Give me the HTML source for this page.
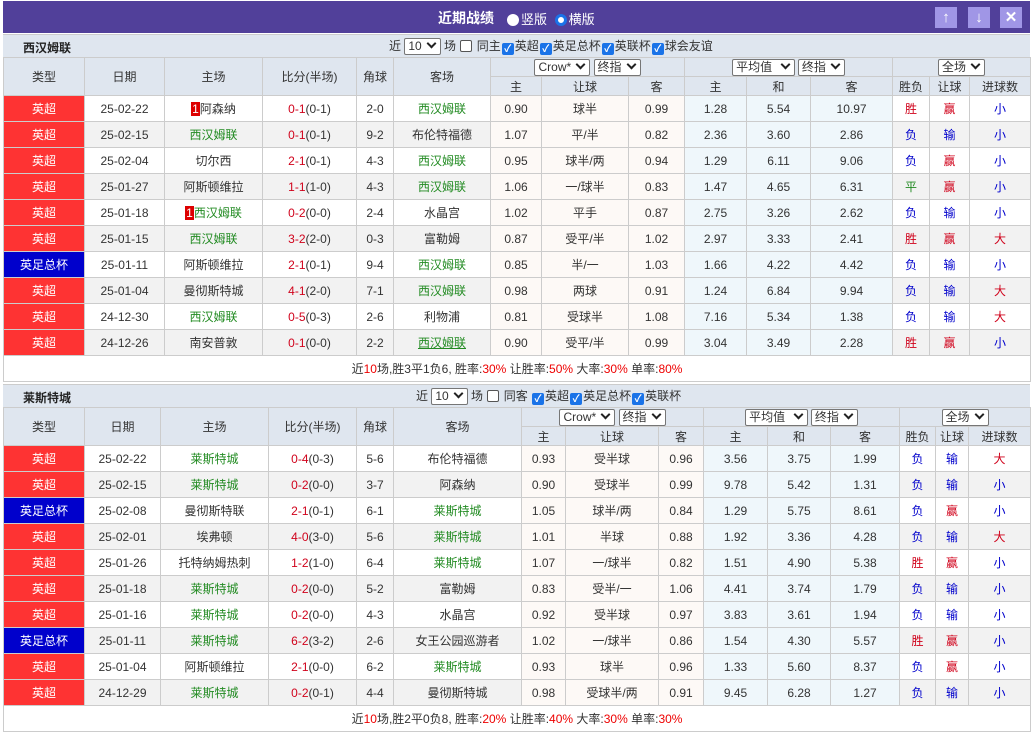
<!DOCTYPE html>
<html><head><meta charset="utf-8"><style>
*{margin:0;padding:0;box-sizing:border-box}
body{width:1033px;height:735px;background:#fff;font-family:"Liberation Sans","Noto Sans CJK SC",sans-serif;font-size:12px;color:#333;position:relative;overflow:hidden}
.bar{position:absolute;left:3px;top:1px;width:1027px;height:32px;background:#51409a;color:#fff}
.bar .t{position:absolute;left:435px;top:7px;font-size:14px;font-weight:bold}
.rad{display:inline-block;width:12px;height:12px;border-radius:50%;background:#fff;vertical-align:-2px;margin:0 2px 0 4px}
.rad.on{border:3px solid #1a73e8;background:#fff}
.bar .r{position:absolute;left:500px;top:8px;font-size:13px}
.btn{position:absolute;top:6px;width:22px;height:21px;background:#a096e6;color:#fff;text-align:center;font-size:15px;line-height:21px;font-weight:bold}
.team{position:absolute;left:3px;width:1027px;height:23px;background:#dfe6ef;border-top:1px solid #ccc}
.team .n{position:absolute;left:20px;top:4px;font-weight:bold;font-size:12px;color:#222}
.team .f{position:absolute;top:2px;font-size:12px;white-space:nowrap}
.sel{display:inline-block;border:1px solid #767676;background:#fff;height:17px;line-height:15px;padding:0 3px;font-size:12px;vertical-align:middle;border-radius:2px}
.sel:after{content:"";display:inline-block;width:5px;height:5px;border-right:2px solid #222;border-bottom:2px solid #222;transform:rotate(45deg);margin:0 2px 3px 6px}
.cb{display:inline-block;width:12px;height:12px;border:1px solid #555;border-radius:2px;background:#fff;vertical-align:-2px;margin:0 1px}
.cb.on{background:#1a73e8;border-color:#1a73e8;color:#fff;font-size:10px;line-height:11px;text-align:center;font-weight:bold}
table{position:absolute;left:3px;border-collapse:collapse;table-layout:fixed;width:1027px}
td{border:1px solid #ccc;text-align:center;white-space:nowrap;overflow:hidden;font-size:12px}
thead td{background:#dfe6ef;color:#333;height:19px}
tbody td{height:26px}
tbody tr:nth-child(even) td{background:#f2f2f2}
td.ty{background:#fe3333!important;color:#fff}
td.fa{background:#0000cc!important;color:#fff}
td.o1{background:#fdf9f6!important}
td.o2{background:#eff7fb!important}
.g{color:#228b22}.rd{color:#d0021b}.bl{color:#00c}
.u{text-decoration:underline}
.rk{background:#d00;color:#fff;padding:0 1px}
.sum td{height:26px;text-align:center;background:#fff!important}
.red{color:#e00}
</style></head><body>
<div class="bar"><span class="t">近期战绩</span><span class="r"><span class="rad"></span>竖版 <span class="rad on"></span>横版</span>
<div class="btn" style="left:932px">↑</div><div class="btn" style="left:965px">↓</div><div class="btn" style="left:997px">✕</div></div>

<div class="team" style="top:34px"><span class="n">西汉姆联</span><span class="f" style="left:386px">近 <span class="sel">10</span> 场 <span class="cb"></span> 同主<span class="cb on">✓</span>英超<span class="cb on">✓</span>英足总杯<span class="cb on">✓</span>英联杯<span class="cb on">✓</span>球会友谊</span></div>

<table style="top:57px">
<colgroup><col style="width:81px"><col style="width:80px"><col style="width:98px"><col style="width:94px"><col style="width:37px"><col style="width:97px"><col style="width:51px"><col style="width:87px"><col style="width:56px"><col style="width:62px"><col style="width:64px"><col style="width:82px"><col style="width:37px"><col style="width:40px"><col style="width:61px"></colgroup>
<thead><tr><td rowspan="2">类型</td><td rowspan="2">日期</td><td rowspan="2">主场</td><td rowspan="2">比分(半场)</td><td rowspan="2">角球</td><td rowspan="2">客场</td><td colspan="3"><span class="sel">Crow*</span> <span class="sel">终指</span></td><td colspan="3"><span class="sel">平均值 </span> <span class="sel">终指</span></td><td colspan="3"><span class="sel">全场</span></td></tr>
<tr><td>主</td><td>让球</td><td>客</td><td>主</td><td>和</td><td>客</td><td>胜负</td><td>让球</td><td>进球数</td></tr></thead>
<tbody>
<tr><td class="ty">英超</td><td>25-02-22</td><td><span class="rk">1</span>阿森纳</td><td><span class="rd">0-1</span>(0-1)</td><td>2-0</td><td class="g">西汉姆联</td><td class="o1">0.90</td><td class="o1">球半</td><td class="o1">0.99</td><td class="o2">1.28</td><td class="o2">5.54</td><td class="o2">10.97</td><td class="rd">胜</td><td class="rd">赢</td><td class="bl">小</td></tr>
<tr><td class="ty">英超</td><td>25-02-15</td><td class="g">西汉姆联</td><td><span class="rd">0-1</span>(0-1)</td><td>9-2</td><td>布伦特福德</td><td class="o1">1.07</td><td class="o1">平/半</td><td class="o1">0.82</td><td class="o2">2.36</td><td class="o2">3.60</td><td class="o2">2.86</td><td class="bl">负</td><td class="bl">输</td><td class="bl">小</td></tr>
<tr><td class="ty">英超</td><td>25-02-04</td><td>切尔西</td><td><span class="rd">2-1</span>(0-1)</td><td>4-3</td><td class="g">西汉姆联</td><td class="o1">0.95</td><td class="o1">球半/两</td><td class="o1">0.94</td><td class="o2">1.29</td><td class="o2">6.11</td><td class="o2">9.06</td><td class="bl">负</td><td class="rd">赢</td><td class="bl">小</td></tr>
<tr><td class="ty">英超</td><td>25-01-27</td><td>阿斯顿维拉</td><td><span class="rd">1-1</span>(1-0)</td><td>4-3</td><td class="g">西汉姆联</td><td class="o1">1.06</td><td class="o1">一/球半</td><td class="o1">0.83</td><td class="o2">1.47</td><td class="o2">4.65</td><td class="o2">6.31</td><td class="g">平</td><td class="rd">赢</td><td class="bl">小</td></tr>
<tr><td class="ty">英超</td><td>25-01-18</td><td class="g"><span class="rk">1</span>西汉姆联</td><td><span class="rd">0-2</span>(0-0)</td><td>2-4</td><td>水晶宫</td><td class="o1">1.02</td><td class="o1">平手</td><td class="o1">0.87</td><td class="o2">2.75</td><td class="o2">3.26</td><td class="o2">2.62</td><td class="bl">负</td><td class="bl">输</td><td class="bl">小</td></tr>
<tr><td class="ty">英超</td><td>25-01-15</td><td class="g">西汉姆联</td><td><span class="rd">3-2</span>(2-0)</td><td>0-3</td><td>富勒姆</td><td class="o1">0.87</td><td class="o1">受平/半</td><td class="o1">1.02</td><td class="o2">2.97</td><td class="o2">3.33</td><td class="o2">2.41</td><td class="rd">胜</td><td class="rd">赢</td><td class="rd">大</td></tr>
<tr><td class="fa">英足总杯</td><td>25-01-11</td><td>阿斯顿维拉</td><td><span class="rd">2-1</span>(0-1)</td><td>9-4</td><td class="g">西汉姆联</td><td class="o1">0.85</td><td class="o1">半/一</td><td class="o1">1.03</td><td class="o2">1.66</td><td class="o2">4.22</td><td class="o2">4.42</td><td class="bl">负</td><td class="bl">输</td><td class="bl">小</td></tr>
<tr><td class="ty">英超</td><td>25-01-04</td><td>曼彻斯特城</td><td><span class="rd">4-1</span>(2-0)</td><td>7-1</td><td class="g">西汉姆联</td><td class="o1">0.98</td><td class="o1">两球</td><td class="o1">0.91</td><td class="o2">1.24</td><td class="o2">6.84</td><td class="o2">9.94</td><td class="bl">负</td><td class="bl">输</td><td class="rd">大</td></tr>
<tr><td class="ty">英超</td><td>24-12-30</td><td class="g">西汉姆联</td><td><span class="rd">0-5</span>(0-3)</td><td>2-6</td><td>利物浦</td><td class="o1">0.81</td><td class="o1">受球半</td><td class="o1">1.08</td><td class="o2">7.16</td><td class="o2">5.34</td><td class="o2">1.38</td><td class="bl">负</td><td class="bl">输</td><td class="rd">大</td></tr>
<tr><td class="ty">英超</td><td>24-12-26</td><td>南安普敦</td><td><span class="rd">0-1</span>(0-0)</td><td>2-2</td><td class="g u">西汉姆联</td><td class="o1">0.90</td><td class="o1">受平/半</td><td class="o1">0.99</td><td class="o2">3.04</td><td class="o2">3.49</td><td class="o2">2.28</td><td class="rd">胜</td><td class="rd">赢</td><td class="bl">小</td></tr>
<tr class="sum"><td colspan="15">近<span class="red">10</span>场,胜3平1负6, 胜率:<span class="red">30%</span> 让胜率:<span class="red">50%</span> 大率:<span class="red">30%</span> 单率:<span class="red">80%</span></td></tr>
</tbody></table>

<div class="team" style="top:384px"><span class="n">莱斯特城</span><span class="f" style="left:413px">近 <span class="sel">10</span> 场 <span class="cb"></span> 同客 <span class="cb on">✓</span>英超<span class="cb on">✓</span>英足总杯<span class="cb on">✓</span>英联杯</span></div>

<table style="top:407px">
<colgroup><col style="width:81px"><col style="width:76px"><col style="width:108px"><col style="width:88px"><col style="width:37px"><col style="width:128px"><col style="width:44px"><col style="width:93px"><col style="width:45px"><col style="width:64px"><col style="width:63px"><col style="width:69px"><col style="width:36px"><col style="width:33px"><col style="width:62px"></colgroup>
<thead><tr><td rowspan="2">类型</td><td rowspan="2">日期</td><td rowspan="2">主场</td><td rowspan="2">比分(半场)</td><td rowspan="2">角球</td><td rowspan="2">客场</td><td colspan="3"><span class="sel">Crow*</span> <span class="sel">终指</span></td><td colspan="3"><span class="sel">平均值 </span> <span class="sel">终指</span></td><td colspan="3"><span class="sel">全场</span></td></tr>
<tr><td>主</td><td>让球</td><td>客</td><td>主</td><td>和</td><td>客</td><td>胜负</td><td>让球</td><td>进球数</td></tr></thead>
<tbody>
<tr><td class="ty">英超</td><td>25-02-22</td><td class="g">莱斯特城</td><td><span class="rd">0-4</span>(0-3)</td><td>5-6</td><td>布伦特福德</td><td class="o1">0.93</td><td class="o1">受半球</td><td class="o1">0.96</td><td class="o2">3.56</td><td class="o2">3.75</td><td class="o2">1.99</td><td class="bl">负</td><td class="bl">输</td><td class="rd">大</td></tr>
<tr><td class="ty">英超</td><td>25-02-15</td><td class="g">莱斯特城</td><td><span class="rd">0-2</span>(0-0)</td><td>3-7</td><td>阿森纳</td><td class="o1">0.90</td><td class="o1">受球半</td><td class="o1">0.99</td><td class="o2">9.78</td><td class="o2">5.42</td><td class="o2">1.31</td><td class="bl">负</td><td class="bl">输</td><td class="bl">小</td></tr>
<tr><td class="fa">英足总杯</td><td>25-02-08</td><td>曼彻斯特联</td><td><span class="rd">2-1</span>(0-1)</td><td>6-1</td><td class="g">莱斯特城</td><td class="o1">1.05</td><td class="o1">球半/两</td><td class="o1">0.84</td><td class="o2">1.29</td><td class="o2">5.75</td><td class="o2">8.61</td><td class="bl">负</td><td class="rd">赢</td><td class="bl">小</td></tr>
<tr><td class="ty">英超</td><td>25-02-01</td><td>埃弗顿</td><td><span class="rd">4-0</span>(3-0)</td><td>5-6</td><td class="g">莱斯特城</td><td class="o1">1.01</td><td class="o1">半球</td><td class="o1">0.88</td><td class="o2">1.92</td><td class="o2">3.36</td><td class="o2">4.28</td><td class="bl">负</td><td class="bl">输</td><td class="rd">大</td></tr>
<tr><td class="ty">英超</td><td>25-01-26</td><td>托特纳姆热刺</td><td><span class="rd">1-2</span>(1-0)</td><td>6-4</td><td class="g">莱斯特城</td><td class="o1">1.07</td><td class="o1">一/球半</td><td class="o1">0.82</td><td class="o2">1.51</td><td class="o2">4.90</td><td class="o2">5.38</td><td class="rd">胜</td><td class="rd">赢</td><td class="bl">小</td></tr>
<tr><td class="ty">英超</td><td>25-01-18</td><td class="g">莱斯特城</td><td><span class="rd">0-2</span>(0-0)</td><td>5-2</td><td>富勒姆</td><td class="o1">0.83</td><td class="o1">受半/一</td><td class="o1">1.06</td><td class="o2">4.41</td><td class="o2">3.74</td><td class="o2">1.79</td><td class="bl">负</td><td class="bl">输</td><td class="bl">小</td></tr>
<tr><td class="ty">英超</td><td>25-01-16</td><td class="g">莱斯特城</td><td><span class="rd">0-2</span>(0-0)</td><td>4-3</td><td>水晶宫</td><td class="o1">0.92</td><td class="o1">受半球</td><td class="o1">0.97</td><td class="o2">3.83</td><td class="o2">3.61</td><td class="o2">1.94</td><td class="bl">负</td><td class="bl">输</td><td class="bl">小</td></tr>
<tr><td class="fa">英足总杯</td><td>25-01-11</td><td class="g">莱斯特城</td><td><span class="rd">6-2</span>(3-2)</td><td>2-6</td><td>女王公园巡游者</td><td class="o1">1.02</td><td class="o1">一/球半</td><td class="o1">0.86</td><td class="o2">1.54</td><td class="o2">4.30</td><td class="o2">5.57</td><td class="rd">胜</td><td class="rd">赢</td><td class="bl">小</td></tr>
<tr><td class="ty">英超</td><td>25-01-04</td><td>阿斯顿维拉</td><td><span class="rd">2-1</span>(0-0)</td><td>6-2</td><td class="g">莱斯特城</td><td class="o1">0.93</td><td class="o1">球半</td><td class="o1">0.96</td><td class="o2">1.33</td><td class="o2">5.60</td><td class="o2">8.37</td><td class="bl">负</td><td class="rd">赢</td><td class="bl">小</td></tr>
<tr><td class="ty">英超</td><td>24-12-29</td><td class="g">莱斯特城</td><td><span class="rd">0-2</span>(0-1)</td><td>4-4</td><td>曼彻斯特城</td><td class="o1">0.98</td><td class="o1">受球半/两</td><td class="o1">0.91</td><td class="o2">9.45</td><td class="o2">6.28</td><td class="o2">1.27</td><td class="bl">负</td><td class="bl">输</td><td class="bl">小</td></tr>
<tr class="sum"><td colspan="15">近<span class="red">10</span>场,胜2平0负8, 胜率:<span class="red">20%</span> 让胜率:<span class="red">40%</span> 大率:<span class="red">30%</span> 单率:<span class="red">30%</span></td></tr>
</tbody></table>
</body></html>
